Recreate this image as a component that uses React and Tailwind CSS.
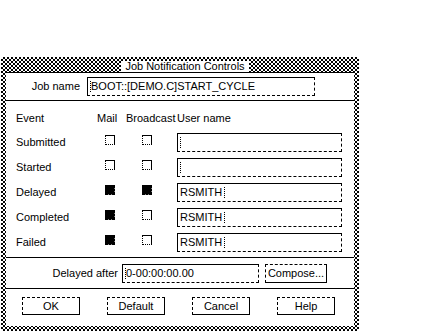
import React from "react";

const checker =
  "bg-[image:repeating-conic-gradient(#000_0%_25%,#fff_0%_50%)] bg-[length:4px_4px]";

const sunken =
  "border border-black [border-bottom-style:dashed] [border-right-style:dashed]";
const raised =
  "border border-black [border-top-style:dashed] [border-left-style:dashed]";

function Cursor({ className = "" }) {
  return (
    <span className={`inline-block w-0 h-[11px] border-l border-dotted border-black ${className}`} />
  );
}

function Check({ on }) {
  if (on) {
    return (
      <div className="w-[10px] h-[10px] bg-black bg-clip-padding border border-black [border-bottom-style:dashed] [border-right-style:dashed]" />
    );
  }
  return (
    <div className="w-[10px] h-[10px] border border-black [border-bottom-style:dotted] [border-left-style:dotted]" />
  );
}

function Row({ label, mail, bc, user }) {
  return (
    <div className="flex h-[19px]">
      <div className="w-[89px] flex items-center">{label}</div>
      <div className="w-[37px] pt-[2px]">
        <Check on={mail} />
      </div>
      <div className="w-[35px] pt-[2px]">
        <Check on={bc} />
      </div>
      <div className={`w-[165px] h-[19px] ${sunken} flex items-center pl-[2px]`}>
        {user ? <span>{user}</span> : null}
        <Cursor className={user ? "ml-[2px]" : ""} />
      </div>
    </div>
  );
}

function Btn({ children }) {
  return (
    <div className={`w-[58px] h-[18px] ${raised} flex items-center justify-center`}>
      {children}
    </div>
  );
}

export default function App() {
  return (
    <div className="w-[428px] h-[332px] bg-white overflow-hidden font-['Liberation_Sans',Arial,sans-serif] text-[11px] leading-[13px] text-black">
      <div className="pt-[57px] pl-[1px]">
        <div className={`w-[358px] h-[274px] ${checker} flex flex-col px-[5px] pb-[5px] pt-[4px]`}>
          <div className="h-[12px] flex justify-center items-end border-b border-black pl-[10px]">
            <div className="bg-white px-[4px] h-[11px] flex items-center">
              Job Notification Controls
            </div>
          </div>
          <div className="flex-1 bg-white flex flex-col">
            <div className="h-[28px] border-b border-black flex items-center">
              <div className="w-[74px] text-right">Job name</div>
              <div className={`ml-[7px] w-[228px] h-[19px] ${sunken} flex items-center pl-[2px]`}>
                <Cursor />
                <span>BOOT::[DEMO.C]START_CYCLE</span>
              </div>
            </div>
            <div className="h-[32px] pt-[11px] pl-[10px] flex">
              <div className="w-[81px]">Event</div>
              <div className="w-[29px]">Mail</div>
              <div className="w-[51px]">Broadcast</div>
              <div>User name</div>
            </div>
            <div className="pl-[10px] flex flex-col gap-[6px] h-[124px]">
              <Row label="Submitted" mail={false} bc={false} />
              <Row label="Started" mail={false} bc={false} />
              <Row label="Delayed" mail={true} bc={true} user="RSMITH" />
              <Row label="Completed" mail={true} bc={false} user="RSMITH" />
              <Row label="Failed" mail={true} bc={false} user="RSMITH" />
            </div>
            <div className="border-b border-black" />
            <div className="h-[31px] border-b border-black flex items-center">
              <div className="w-[112px] text-right">Delayed after</div>
              <div className={`ml-[4px] w-[137px] h-[19px] ${sunken} flex items-center pl-[2px]`}>
                <Cursor />
                <span>0-00:00:00.00</span>
              </div>
              <div className={`ml-[6px] w-[62px] h-[19px] ${raised} flex items-center justify-center`}>
                Compose...
              </div>
            </div>
            <div className="flex-1 flex items-start pt-[8px] pl-[16px] gap-[27px]">
              <Btn>OK</Btn>
              <Btn>Default</Btn>
              <Btn>Cancel</Btn>
              <Btn>Help</Btn>
            </div>
          </div>
        </div>
      </div>
    </div>
  );
}
